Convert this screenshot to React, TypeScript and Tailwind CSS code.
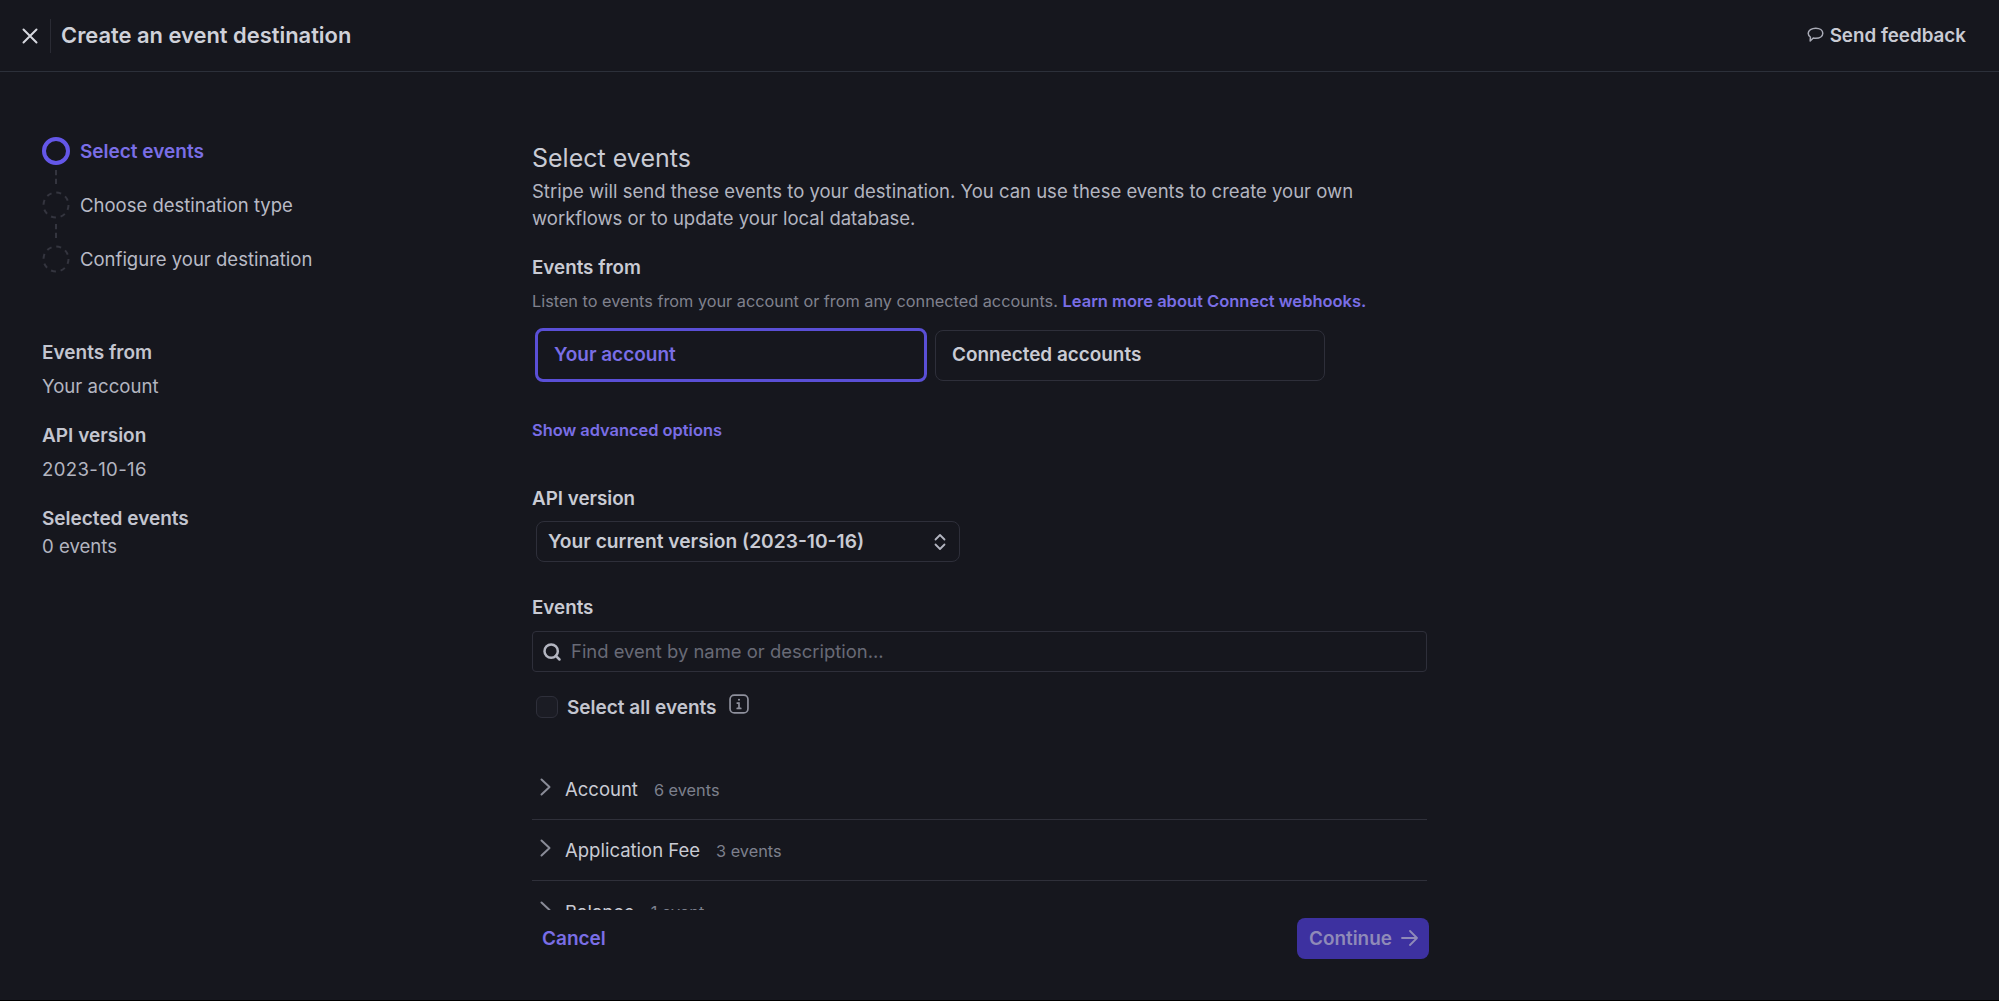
import React from "react";
import { Search } from "lucide-react";

function Step({ label, active, last }: { label: string; active?: boolean; last?: boolean }) {
  return (
    <div className="flex flex-col">
      <div className="flex items-center h-[28px]">
        {active ? (
          <span className="w-[28px] h-[28px] rounded-full border-[4px] border-[#6457e8] shrink-0" />
        ) : (
          <svg width="28" height="28" viewBox="0 0 28 28" className="shrink-0">
            <circle cx="14" cy="14" r="12.5" fill="none" stroke="#34353f" strokeWidth="2" strokeDasharray="5 4.8" />
          </svg>
        )}
        <span className={active ? "ml-[10px] mt-[2px] text-[19px] font-semibold text-[#7a6ee6]" : "ml-[10px] mt-[2px] text-[18.5px] text-[#b9bbc6]"}>{label}</span>
      </div>
      {!last && <div className="ml-[13px] mt-[5px] mb-[7px] h-[14px] border-l-2 border-dashed border-[#34353f]" />}
    </div>
  );
}

function Row({ title, count, border = true }: { title: string; count: string; border?: boolean }) {
  return (
    <div className={border ? "h-[61px] shrink-0 flex items-center border-b border-[#2f303a] pl-[8px]" : "h-[61px] shrink-0 flex items-center pl-[8px]"}>
      <svg width="11" height="18" viewBox="0 0 11 18" fill="none" stroke="#8a8c98" strokeWidth="2" strokeLinecap="round" strokeLinejoin="round" className="-mt-[4px]">
        <path d="M1.500 1.500 9.500 9 1.500 16.500" />
      </svg>
      <span className="ml-[14px] mt-[2px] text-[18.5px] text-[#c9cbd4]">{title}</span>
      <span className="ml-[16px] mt-[2px] text-[16.300px] text-[#7d808d]">{count}</span>
    </div>
  );
}

export default function App() {
  return (
    <div className="w-[1999px] h-[1001px] overflow-hidden flex flex-col bg-[#16171e] text-[#c9cbd4] font-['Inter',sans-serif]">
      <header className="h-[72px] shrink-0 flex items-center border-b border-[#2c303a] pl-[22px] pr-[33px]">
        <svg width="16" height="16" viewBox="0 0 16 16" fill="none" stroke="#d6d8df" strokeWidth="2" strokeLinecap="round">
          <path d="M1.500 1.500 14.500 14.500M14.500 1.500 1.500 14.500" />
        </svg>
        <div className="ml-[12px] w-px h-[34px] bg-[#2a2b34]" />
        <h1 className="ml-[10px] text-[21.900px] font-semibold text-[#cfd1d9]">Create an event destination</h1>
        <div className="ml-auto flex items-center gap-[6px]">
          <svg width="17" height="16" viewBox="0 0 17 16" fill="none" stroke="#a9abb6" strokeWidth="1.5" className="-mt-[2px]">
            <path d="M8.800 1.200c4 0 7 2.100 7 5.100 0 2.900-3 5-7 5-.9 0-1.700-.1-2.500-.3L3.200 14l.2-4C1.900 9 1.200 7.800 1.200 6.300c0-3 3.400-5.100 7.600-5.100z" strokeLinejoin="round" />
          </svg>
          <span className="mt-[1px] text-[18.800px] font-semibold text-[#c9cbd4]">Send feedback</span>
        </div>
      </header>

      <div className="flex-1 min-h-0 flex">
        <aside className="w-[532px] shrink-0 pl-[42px] pt-[65px]">
          <Step label="Select events" active />
          <Step label="Choose destination type" />
          <Step label="Configure your destination" last />
          <div className="mt-[68px] flex flex-col leading-[24px]">
            <span className="text-[19px] font-semibold text-[#c3c5cf]">Events from</span>
            <span className="mt-[9px] text-[18.600px] text-[#b3b5c0]">Your account</span>
            <span className="mt-[26px] text-[19px] font-semibold text-[#c3c5cf]">API version</span>
            <span className="mt-[9px] text-[18.600px] tracking-[0.35px] text-[#b3b5c0]">2023-10-16</span>
            <span className="mt-[26px] text-[19px] font-semibold text-[#c3c5cf]">Selected events</span>
            <span className="mt-[3px] text-[18.600px] text-[#b3b5c0]">0 events</span>
          </div>
        </aside>

        <main className="w-[897px] shrink-0 flex flex-col">
          <div className="h-[838px] shrink-0 overflow-hidden pt-[69px] flex flex-col">
            <h2 className="text-[25px] leading-[34px] text-[#c9cbd4] shrink-0">Select events</h2>
            <p className="mt-[3px] w-[880px] text-[18.500px] leading-[27px] text-[#b3b5c0] shrink-0">
              Stripe will send these events to your destination. You can use these events to create your own workflows or to update your local database.
            </p>
            <div className="mt-[24px] text-[18.800px] leading-[24px] font-semibold text-[#c9cbd4] shrink-0">Events from</div>
            <p className="mt-[10px] text-[16.280px] leading-[22px] text-[#80828e] shrink-0">
              Listen to events from your account or from any connected accounts.{" "}
              <span className="text-[16.500px] font-semibold text-[#7a6ee6]">Learn more about Connect webhooks.</span>
            </p>
            <div className="mt-[16px] ml-[3px] flex items-center gap-[8px] shrink-0">
              <div className="w-[392px] h-[54px] flex items-center rounded-[8px] border-[3px] border-[#5a4fd6] pl-[16px] text-[19px] font-semibold text-[#7a6ee6]">Your account</div>
              <div className="w-[390px] h-[51px] flex items-center rounded-[8px] border border-[#2e2f3a] pl-[16px] text-[18.900px] font-semibold text-[#c9cbd4]">Connected accounts</div>
            </div>
            <div className="mt-[37px] text-[16.400px] leading-[22px] font-semibold text-[#7a6ee6] shrink-0">Show advanced options</div>
            <div className="mt-[46px] text-[18.800px] leading-[24px] font-semibold text-[#c9cbd4] shrink-0">API version</div>
            <div className="mt-[10px] ml-[4px] w-[424px] h-[41px] flex items-center justify-between rounded-[8px] border border-[#2e2f3a] pl-[11px] pr-[12px] shrink-0">
              <span className="text-[19.200px] font-semibold text-[#c9cbd4]">Your current version (2023-10-16)</span>
              <svg width="14" height="18" viewBox="0 0 14 18" fill="none" stroke="#b3b5c0" strokeWidth="1.800" strokeLinecap="round" strokeLinejoin="round">
                <path d="M2.500 6.500 7 2l4.500 4.500M2.500 11.500 7 16l4.500-4.500" />
              </svg>
            </div>
            <div className="mt-[34px] text-[18.800px] leading-[24px] font-semibold text-[#c9cbd4] shrink-0">Events</div>
            <div className="mt-[11px] w-[895px] h-[41px] flex items-center rounded-[4px] border border-[#2e2f3a] pl-[9px] shrink-0">
              <Search className="w-[20px] h-[20px] text-[#b3b5c0]" strokeWidth={3} />
              <span className="ml-[9px] text-[18.450px] text-[#686a76]">Find event by name or description...</span>
            </div>
            <div className="mt-[23px] ml-[4px] h-[24px] flex items-center shrink-0">
              <span className="w-[22px] h-[22px] rounded-[6px] border border-[#2e2f3a] bg-[#1b1c24]" />
              <span className="ml-[9px] mt-[2px] text-[19px] font-semibold text-[#c3c5cf]">Select all events</span>
              <svg width="20" height="20" viewBox="0 0 19 19" fill="none" stroke="#8f919d" strokeWidth="1.600" className="ml-[12px] -mt-[6px]">
                <rect x="1" y="1" width="17" height="17" rx="4" />
                <path d="M9.500 8.500v5M7.800 13.700h3.400M7.800 8.600h1.700" strokeLinecap="round" />
                <circle cx="9.500" cy="5.400" r="1" fill="#8f919d" stroke="none" />
              </svg>
            </div>
            <div className="mt-[40px] flex flex-col w-[895px]">
              <Row title="Account" count="6 events" />
              <Row title="Application Fee" count="3 events" />
              <Row title="Balance" count="1 event" border={false} />
            </div>
          </div>
          <div className="flex items-center justify-between h-[52px] mt-[2px] shrink-0 pl-[10px]">
            <span className="mt-[2px] text-[19px] font-semibold text-[#7a6ee6]">Cancel</span>
            <button className="w-[132px] h-[41px] rounded-[8px] bg-[#3d31a0] flex items-center pl-[12px] gap-[9px] text-[18.900px] font-semibold text-[#8f8ab8]">
              <span className="mt-[2px]">Continue</span>
              <svg width="17" height="16" viewBox="0 0 17 16" fill="none" stroke="#8f8ab8" strokeWidth="1.800" strokeLinecap="round" strokeLinejoin="round">
                <path d="M1 8h15M9 1l7 7-7 7" />
              </svg>
            </button>
          </div>
        </main>
      </div>
      <div className="h-[1px] shrink-0 bg-black" />
    </div>
  );
}
